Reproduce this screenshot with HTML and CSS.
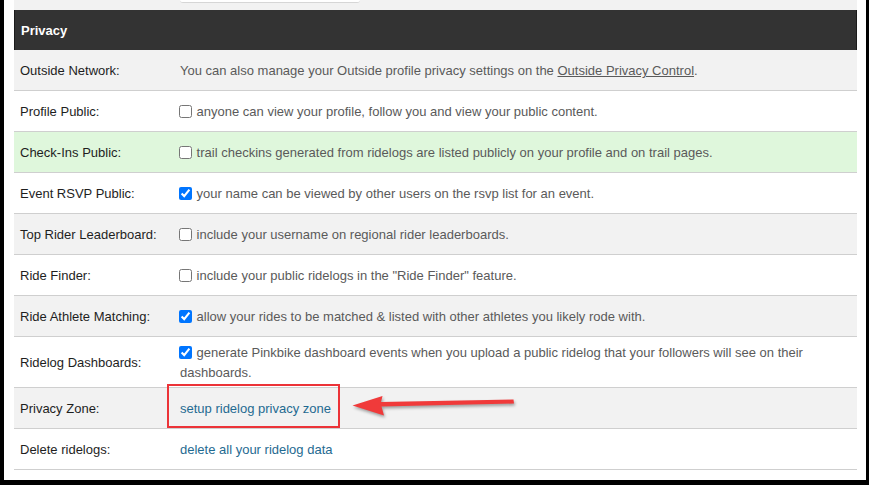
FILE: index.html
```html
<!DOCTYPE html>
<html lang="en">
<head>
<meta charset="utf-8">
<title>Privacy settings</title>
<link rel="stylesheet" href="styles.css">
</head>
<body>
<div class="frame">
  <div class="page">
    <div class="topbar"><div class="search"></div></div>
    <div class="settings">
      <div class="header">Privacy</div>
      <div class="row grey">
        <div class="label">Outside Network:</div>
        <div class="value">You can also manage your Outside profile privacy settings on the <a class="plain" href="#">Outside Privacy Control</a>.</div>
      </div>
      <div class="row">
        <div class="label">Profile Public:</div>
        <div class="value"><input type="checkbox" class="check"> anyone can view your profile, follow you and view your public content.</div>
      </div>
      <div class="row green">
        <div class="label">Check-Ins Public:</div>
        <div class="value"><input type="checkbox" class="check"> trail checkins generated from ridelogs are listed publicly on your profile and on trail pages.</div>
      </div>
      <div class="row">
        <div class="label">Event RSVP Public:</div>
        <div class="value"><input type="checkbox" class="check" checked> your name can be viewed by other users on the rsvp list for an event.</div>
      </div>
      <div class="row grey">
        <div class="label">Top Rider Leaderboard:</div>
        <div class="value"><input type="checkbox" class="check"> include your username on regional rider leaderboards.</div>
      </div>
      <div class="row">
        <div class="label">Ride Finder:</div>
        <div class="value"><input type="checkbox" class="check"> include your public ridelogs in the "Ride Finder" feature.</div>
      </div>
      <div class="row grey">
        <div class="label">Ride Athlete Matching:</div>
        <div class="value"><input type="checkbox" class="check" checked> allow your rides to be matched &amp; listed with other athletes you likely rode with.</div>
      </div>
      <div class="row">
        <div class="label">Ridelog Dashboards:</div>
        <div class="value"><input type="checkbox" class="check" checked> generate Pinkbike dashboard events when you upload a public ridelog that your followers will see on their dashboards.</div>
      </div>
      <div class="row grey">
        <div class="label">Privacy Zone:</div>
        <div class="value"><a class="link" href="#">setup ridelog privacy zone</a></div>
      </div>
      <div class="row">
        <div class="label">Delete ridelogs:</div>
        <div class="value"><a class="link" href="#">delete all your ridelog data</a></div>
      </div>
    </div>
  </div>
  <div class="callout-box"></div>
  <svg class="callout-arrow" width="180" height="36" viewBox="0 0 180 36" aria-hidden="true">
    <path d="M7.5 18.5 L37.5 9 L36 15 L168.5 12.4 L169 16.6 L36.5 19.6 L39 28.5 Z" fill="#f03a3a"/>
  </svg>
</div>
</body>
</html>
```
FILE: styles.css
```css
html, body {
  margin: 0;
  padding: 0;
}

body {
  background: #000;
  width: 869px;
  height: 485px;
  overflow: hidden;
  font-family: "Liberation Sans", Arial, sans-serif;
  font-size: 13px;
}

.frame {
  position: relative;
  margin: 2px 3px 0 4px;
  height: 480px;
  padding: 0 9px 0 10px;
  background: #fff;
}

.page {
  margin-top: -2px;
}

.topbar {
  height: 10px;
  background: #f2f2f2;
}

.search {
  margin-left: 166px;
  width: 180px;
  height: 2px;
  background: #fff;
  border-bottom: 1px solid #d6d6d6;
  border-radius: 0 0 3px 3px;
}

.header {
  height: 40px;
  display: flex;
  align-items: center;
  padding-left: 6px;
  background: #333;
  border-left: 1px solid #1c1c1c;
  border-right: 1px solid #1c1c1c;
  color: #fff;
  font-weight: bold;
}

.row {
  display: grid;
  grid-template-columns: 166px 1fr;
  align-items: center;
  min-height: 40px;
  border-bottom: 1px solid #cfcfcf;
  background: #fff;
  line-height: 20px;
}

.row.grey {
  background: #f2f2f2;
}

.row.green {
  background: #dff7dc;
}

.label {
  padding: 6px 0 4px 6px;
  color: #1e1e1e;
}

.value {
  padding: 6px 20px 4px 0;
  color: #5a5a5a;
}

.check {
  width: 13px;
  height: 13px;
  margin: 0 1px 0 -1px;
  vertical-align: -2px;
}

.plain {
  color: #5a5a5a;
  text-decoration: underline;
}

.link {
  color: #1f6a91;
  text-decoration: none;
}

/* annotation drawn over the privacy zone row */
.callout-box {
  position: absolute;
  left: 163px;
  top: 384px;
  width: 169px;
  height: 40px;
  border: 2px solid #ec3338;
}

.callout-arrow {
  position: absolute;
  left: 341px;
  top: 387px;
  filter: drop-shadow(1px 2px 1.5px rgba(0, 0, 0, 0.35));
}
```
